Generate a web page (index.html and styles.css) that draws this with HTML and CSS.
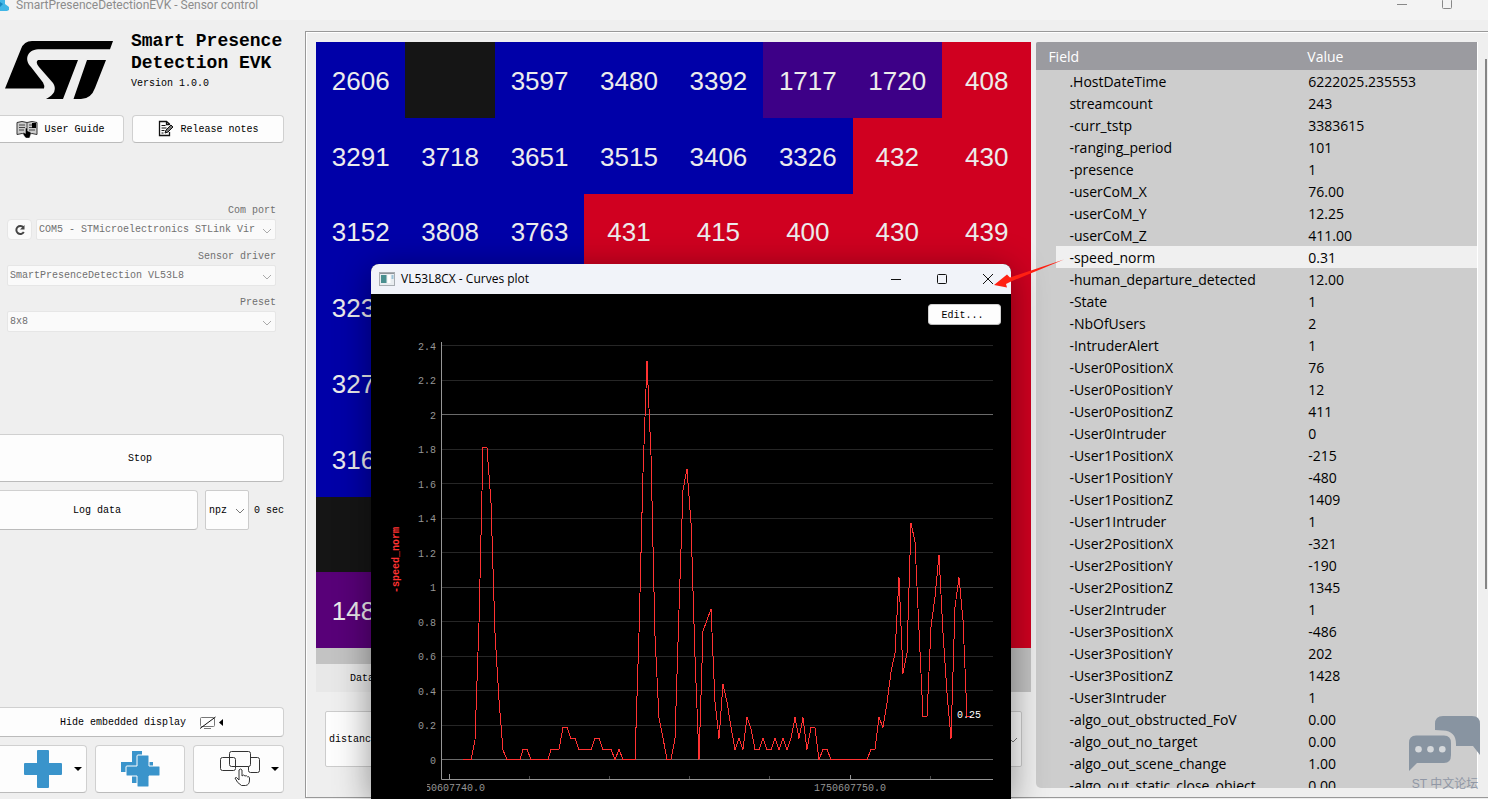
FILE: index.html
```html
<!DOCTYPE html>
<html lang="en">
<head>
<meta charset="utf-8">
<title>SmartPresenceDetectionEVK - Sensor control</title>
<link rel="stylesheet" href="styles.css">
</head>
<body>
<div class="app">
  <header class="titlebar">
    <svg class="app-icon" width="10" height="12" viewBox="0 0 10 12"><path d="M0 0H5V4L9 7V10L7 11H0Z" fill="#41b6e6"/><path d="M0 2l3 2-3 3z" fill="#1787c0"/></svg>
    <span class="app-title">SmartPresenceDetectionEVK - Sensor control</span>
    <svg class="app-controls" width="60" height="12" viewBox="0 0 60 12" fill="none" stroke="#888"><path d="M1 4.500h10"/><rect x="46.500" y="-0.500" width="9" height="9" rx="1"/></svg>
  </header>
  <div class="workspace">
    <aside class="sidebar">
      <div class="brand">
        <svg class="logo" width="110" height="60" viewBox="4 40 110 60"><path d="M5 88.500L21 49Q24 41 32 41H113L110 49.300H38C27 50 24 60 31 67L43 82.500Q45 86 44 88.500Z"/><path d="M38 60H78L63 99H46Q59 92 53 83L39 67Q35 62 38 60Z"/><path d="M87 60H106L95 88Q91 99 81 99H73.500Z"/></svg>
        <div>
          <h1 class="product">Smart Presence<br>Detection EVK</h1>
          <p class="version">Version 1.0.0</p>
        </div>
      </div>
      <div class="doc-buttons">
        <button class="btn doc" type="button">
          <svg width="22" height="18" viewBox="0 0 22 18"><path d="M1 2.500Q6 .5 11 2.500Q16 .5 21 2.500V14.500Q16 12.500 11 14.500Q6 12.500 1 14.500Z" fill="#ccc" stroke="#333"/><path d="M11 2.500v12M3 5h6M3 7.500h6M3 10h5M13 5h3M13 7.500h3M13 10h6" stroke="#444" fill="none"/><path d="M16 3h4v5h-4z"/><path d="M9 17Q6 13 7.500 12.500L9.500 13.500V8.500q1-1 2 0V11l3 1q1 1 0 3l-1 3H10Z" stroke="#ddd" stroke-width=".4"/></svg>
          User Guide</button>
        <button class="btn doc" type="button">
          <svg width="16" height="18" viewBox="0 0 16 18" fill="none" stroke="#111"><path d="M11.500 5V4L8.500 1.500H1.500v14h10V12M8.500 1.500V4.500h3" stroke-width="1.300"/><path d="M3.500 5.500h4M3.500 8h5M3.500 10.500h3M3.500 13h2" /><path d="M7 13l1-3 5-5 2 2-5 5Z" fill="#777"/></svg>
          Release notes</button>
      </div>
      <div class="settings">
        <label for="com">Com port</label>
        <div class="port-row">
          <button class="btn refresh" type="button" disabled aria-label="Refresh"><svg width="12" height="12" viewBox="0 0 12 12" fill="none" stroke="#444" stroke-width="2"><path d="M9.500 3.500A4 4 0 1 0 9.800 8"/><path d="M10.500 1v4.500H6z" fill="#444" stroke="none"/></svg></button>
          <span class="picker"><select id="com" disabled><option>COM5 - STMicroelectronics STLink Vir</option></select><svg class="chevron" width="10" height="6" viewBox="0 0 10 6"><path d="M1 1l4 4 4-4"/></svg></span>
        </div>
        <label for="driver">Sensor driver</label>
        <span class="picker"><select id="driver" disabled><option>SmartPresenceDetection VL53L8</option></select><svg class="chevron" width="10" height="6" viewBox="0 0 10 6"><path d="M1 1l4 4 4-4"/></svg></span>
        <label for="preset">Preset</label>
        <span class="picker"><select id="preset" disabled><option>8x8</option></select><svg class="chevron" width="10" height="6" viewBox="0 0 10 6"><path d="M1 1l4 4 4-4"/></svg></span>
      </div>
      <button class="btn stop" type="button">Stop</button>
      <div class="log-row">
        <button class="btn log" type="button">Log data</button>
        <span class="picker format"><select aria-label="Log format"><option>npz</option></select><svg class="chevron" width="10" height="6" viewBox="0 0 10 6"><path d="M1 1l4 4 4-4"/></svg></span>
        <span class="elapsed">0 sec</span>
      </div>
      <div class="tools">
        <button class="btn hide" type="button">Hide embedded display
          <svg width="25" height="14" viewBox="0 0 25 14"><rect x="1.500" y="1.500" width="14" height="9" rx="1" fill="none" stroke="#777"/><path d="M5 12.500h7" stroke="#777"/><path d="M1 12.500L16.500 1" stroke="#111" fill="none"/><path d="M24 3v7l-4-3.500z"/></svg>
        </button>
        <div class="tool-row">
          <button class="btn tool" type="button" aria-label="Add display"><svg width="40" height="40" viewBox="0 0 40 40"><path d="M15 1h10q1 0 1 1V14H38q1 0 1 1V25q0 1-1 1H26V38q0 1-1 1H15q-1 0-1-1V26H2q-1 0-1-1V15q0-1 1-1H14V2q0-1 1-1Z" fill="#3a94cb"/></svg><svg width="8" height="4" viewBox="0 0 8 4"><path d="M0 0h8L4 4z"/></svg></button>
          <button class="btn tool centered" type="button" aria-label="Add several displays"><svg width="40" height="40" viewBox="0 0 40 40" fill="#3a94cb"><path d="M12 2h10v11h11v10H22v11H12V23H1V13H12Z"/><path d="M18 6h10q1 0 1 1V17H39q1 0 1 1v8q0 1-1 1H29V37q0 1-1 1H18q-1 0-1-1V27H7q-1 0-1-1V18q0-1 1-1H17V7q0-1 1-1Z" stroke="#fdfdfd"/></svg></button>
          <button class="btn tool" type="button" aria-label="Select layout"><svg width="40" height="40" viewBox="0 0 40 40" fill="none" stroke="#333"><rect x=".5" y="8.500" width="15" height="13" rx="2"/><rect x="9.500" y="2.500" width="21" height="15" rx="2"/><path d="M30.500 8.500h7q2 0 2 2v11q0 2-2 2h-7q-2 0-2-2v-4"/><path d="M19 31V21q1.500-2 3 0v6q1.500-2 3 0 1.500-1 2.500 .8 1.500-.8 2 1V31q0 5-4 5.500h-4Q17 34 15 29q1-2 4 2Z" fill="#fdfdfd"/></svg><svg width="8" height="4" viewBox="0 0 8 4"><path d="M0 0h8L4 4z"/></svg></button>
        </div>
      </div>
    </aside>

    <main class="display">
      <section class="map-pane">
        <div class="heatmap">
          <span>2606</span><span class="none"></span><span>3597</span><span>3480</span><span>3392</span><span class="mid">1717</span><span class="mid">1720</span><span class="near">408</span>
          <span>3291</span><span>3718</span><span>3651</span><span>3515</span><span>3406</span><span>3326</span><span class="near">432</span><span class="near">430</span>
          <span>3152</span><span>3808</span><span>3763</span><span class="near">431</span><span class="near">415</span><span class="near">400</span><span class="near">430</span><span class="near">439</span>
          <span>3230</span><span></span><span></span><span class="near"></span><span class="near"></span><span class="near"></span><span class="near"></span><span class="near"></span>
          <span>3270</span><span></span><span></span><span class="near"></span><span class="near"></span><span class="near"></span><span class="near"></span><span class="near"></span>
          <span>3160</span><span></span><span></span><span class="near"></span><span class="near"></span><span class="near"></span><span class="near"></span><span class="near"></span>
          <span class="none"></span><span></span><span></span><span class="near"></span><span class="near"></span><span class="near"></span><span class="near"></span><span class="near"></span>
          <span class="far">1480</span><span></span><span></span><span class="near"></span><span class="near"></span><span class="near"></span><span class="near"></span><span class="near"></span>
        </div>
        <div class="tabs"><button class="tab" type="button">Data</button></div>
        <div class="source"><span class="picker"><select aria-label="Data source"><option>distance</option></select><svg class="chevron" width="10" height="6" viewBox="0 0 10 6"><path d="M1 1l4 4 4-4"/></svg></span></div>
      </section>
      <section class="fields">
        <table>
          <thead><tr><th>Field</th><th>Value</th></tr></thead>
          <tbody>
            <tr><td>.HostDateTime</td><td>6222025.235553</td></tr>
            <tr><td>streamcount</td><td>243</td></tr>
            <tr><td>-curr_tstp</td><td>3383615</td></tr>
            <tr><td>-ranging_period</td><td>101</td></tr>
            <tr><td>-presence</td><td>1</td></tr>
            <tr><td>-userCoM_X</td><td>76.00</td></tr>
            <tr><td>-userCoM_Y</td><td>12.25</td></tr>
            <tr><td>-userCoM_Z</td><td>411.00</td></tr>
            <tr class="selected"><td>-speed_norm</td><td>0.31</td></tr>
            <tr><td>-human_departure_detected</td><td>12.00</td></tr>
            <tr><td>-State</td><td>1</td></tr>
            <tr><td>-NbOfUsers</td><td>2</td></tr>
            <tr><td>-IntruderAlert</td><td>1</td></tr>
            <tr><td>-User0PositionX</td><td>76</td></tr>
            <tr><td>-User0PositionY</td><td>12</td></tr>
            <tr><td>-User0PositionZ</td><td>411</td></tr>
            <tr><td>-User0Intruder</td><td>0</td></tr>
            <tr><td>-User1PositionX</td><td>-215</td></tr>
            <tr><td>-User1PositionY</td><td>-480</td></tr>
            <tr><td>-User1PositionZ</td><td>1409</td></tr>
            <tr><td>-User1Intruder</td><td>1</td></tr>
            <tr><td>-User2PositionX</td><td>-321</td></tr>
            <tr><td>-User2PositionY</td><td>-190</td></tr>
            <tr><td>-User2PositionZ</td><td>1345</td></tr>
            <tr><td>-User2Intruder</td><td>1</td></tr>
            <tr><td>-User3PositionX</td><td>-486</td></tr>
            <tr><td>-User3PositionY</td><td>202</td></tr>
            <tr><td>-User3PositionZ</td><td>1428</td></tr>
            <tr><td>-User3Intruder</td><td>1</td></tr>
            <tr><td>-algo_out_obstructed_FoV</td><td>0.00</td></tr>
            <tr><td>-algo_out_no_target</td><td>0.00</td></tr>
            <tr><td>-algo_out_scene_change</td><td>1.00</td></tr>
            <tr><td>-algo_out_static_close_object</td><td>0.00</td></tr>
          </tbody>
        </table>
      </section>
      <div class="scroll-thumb"></div>
    </main>
  </div>

  <section class="window">
    <header class="window-bar">
      <svg width="16" height="14" viewBox="0 0 16 14"><rect x=".5" y=".5" width="15" height="13" fill="#e9edf0" stroke="#a8adb2"/><path d="M1 1.500h14" stroke="#8f959b"/><path d="M2 3h5.500v8H2z" fill="#4a8f8f"/><path d="M8.500 3h3v8h-3z" fill="#fff"/><path d="M12.500 3h2v4h-2z" fill="#9cc3d8"/></svg>
      <h2 class="window-title">VL53L8CX - Curves plot</h2>
      <div class="window-controls">
        <button type="button" aria-label="Minimize"><svg width="12" height="12" viewBox="0 0 12 12"><path d="M1 6.500h10"/></svg></button>
        <button type="button" aria-label="Maximize"><svg width="12" height="12" viewBox="0 0 12 12"><rect x="1.500" y="1.500" width="9" height="9" rx="1"/></svg></button>
        <button type="button" aria-label="Close"><svg width="12" height="12" viewBox="0 0 12 12"><path d="M1 1l10 10M11 1L1 11"/></svg></button>
      </div>
    </header>
    <div class="plot">
      <button class="btn edit" type="button">Edit...</button>
      <svg class="chart" width="640" height="505" viewBox="371 294 640 505">
        <defs><clipPath id="axis-clip"><rect x="427" y="780" width="570" height="19"/></clipPath></defs>
        <g class="grid"><path d="M442 725.500H993M442 690.500H993M442 656.500H993M442 621.500H993M442 552.500H993M442 518.500H993M442 483.500H993M442 449.500H993M442 380.500H993M442 345.500H993"/><path class="unit" d="M442 587.500H993"/><path class="major" d="M442 414.500H993M442 759.500H993"/></g>
        <path class="axis" d="M441.500 342V779.500H993M449.500 774v5M850.500 775v4"/><path class="minor" d="M529.500 776v3M609.500 776v3M689.500 776v3M769.500 776v3M930.500 776v3"/>
        <g class="ylabels"><text x="436" y="350">2.4</text><text x="436" y="384">2.2</text><text x="436" y="419">2</text><text x="436" y="453">1.8</text><text x="436" y="488">1.6</text><text x="436" y="522">1.4</text><text x="436" y="557">1.2</text><text x="436" y="591">1</text><text x="436" y="626">0.8</text><text x="436" y="660">0.6</text><text x="436" y="695">0.4</text><text x="436" y="729">0.2</text><text x="436" y="764">0</text></g>
        <g class="xlabels" clip-path="url(#axis-clip)"><text x="449" y="791">1750607740.0</text><text x="850" y="791">1750607750.0</text></g>
        <text class="series" transform="translate(399 560) rotate(-90)">-speed_norm</text>
        <polyline class="curve" points="463,759.500 471,759.500 475,740 479,623 483,447.500 487,447.500 491,503 495,633 499,700 503,750 507,759.500 520,759.500 523,749.500 527,749.500 531,759.500 548,759.500 551,749.500 559,749.500 563,727.500 567,727.500 571,738.500 575,738.500 579,749.500 591,749.500 595,738.500 599,738.500 603,749.500 611,749.500 615,759.500 619,749.500 623,759.500 635,759.500 639,633 643,473 647,361 651,455 655,636 659,718 663,738 667,759.500 671,759.500 675,738.500 679,610 683,490 687,469 691,523 695,657 699,759.500 703,631 707,620 711,609 715,702 719,738.500 723,684 727,702 731,727 735,749.500 739,738.500 743,749.500 747,717.500 751,728.500 755,749.500 759,749.500 763,738.500 767,749.500 771,749.500 775,738.500 779,749.500 783,738.500 787,749.500 791,738.500 795,717.500 799,738.500 803,717.500 807,749.500 811,727.500 815,727.500 819,759.500 823,749.500 827,749.500 831,759.500 867,759.500 871,749.500 875,749.500 879,717.500 883,727.500 887,703 891,672 895,653 899,577.500 903,673.500 907,653 911,523 915,542 919,630 923,716.500 927,716.500 931,627 935,597 939,555 943,633 947,693 951,738.500 955,607 959,577.500 963,620 967,716.500 971,716.500"/>
        <text class="reading" x="957" y="718">0.25</text>
      </svg>
    </div>
  </section>

  <svg class="pointer" width="70" height="30" viewBox="994 258 70 30"><path d="M1064 259.500L1010 277.500 1007 274.500 994 285 1007 287.500 1006 284 1011 281.500Z" fill="#ff2012"/></svg>
  <div class="watermark">
    <svg width="72" height="56" viewBox="1409 716 72 56" fill="#8894a1"><path d="M1435 730V724Q1435 716 1443 716H1472Q1480 716 1480 724V755L1473 746H1456V744Q1456 731 1443 730.500Z"/><path d="M1416 735.500H1444Q1451 735.500 1451 743V755Q1451 763 1444 763H1417L1409 771V743Q1409 735.500 1416 735.500Z"/><g fill="#d5d8db"><circle cx="1418.500" cy="749.300" r="3.300"/><circle cx="1430.500" cy="749.300" r="3.300"/><circle cx="1442.300" cy="749.300" r="3.300"/></g></svg>
    <span>ST 中文论坛</span>
  </div>
</div>
</body>
</html>
```

FILE: styles.css
```css
* { box-sizing: border-box; }
body { margin: 0; background: #efefef; color: #000; font: 10px/14px "Liberation Mono", monospace; }
h1, h2, p { margin: 0; font-weight: normal; }
button, select { font: inherit; color: inherit; margin: 0; }
svg { display: block; flex: none; }

.app { position: relative; display: flex; flex-direction: column; height: 100vh; overflow: hidden; }
.titlebar { display: flex; align-items: flex-start; flex: none; height: 20px; padding-right: 32px; background: #f3f3f3; color: #8c8c8c; font: 12px/10px Roboto, "Noto Sans", sans-serif; }
.app-title { margin-left: 6px; }
.app-controls { margin-left: auto; }
.workspace { display: flex; flex: 1; min-height: 0; }

.sidebar { display: flex; flex-direction: column; flex: none; width: 288px; margin: 10px 21px 6px -4px; }
.brand { display: flex; gap: 17px; height: 85px; padding-left: 8px; }
.logo { margin-top: 10px; }
.product { font-weight: bold; font-size: 18px; line-height: 22px; white-space: nowrap; }
.version { margin-top: 3px; }

.btn { display: flex; align-items: center; justify-content: center; padding: 2px 0 0; background: #fdfdfd; border: 1px solid #d0d0d0; border-bottom-color: #bbb; border-radius: 4px; white-space: nowrap; }
.doc-buttons { display: flex; gap: 8px; }
.doc { flex: 152; height: 28px; gap: 7px; }
.doc:first-child { flex: 128; }
.doc svg { margin-bottom: 2px; }

.settings { display: flex; flex-direction: column; padding: 61px 8px 0 11px; color: #707070; }
.settings label { line-height: 14px; text-align: right; margin-bottom: 1px; }
.settings .picker { height: 21px; margin-bottom: 10px; }
.port-row { display: flex; gap: 4px; }
.port-row .picker { flex: 1; }
.refresh { width: 25px; height: 21px; padding: 0; background: #fafafa; border-color: #e6e6e6; }

.picker { position: relative; display: flex; }
.picker select { appearance: none; width: 100%; padding: 2px 18px 0 3px; background: #fdfdfd; border: 1px solid #ccc; border-radius: 2px; opacity: 1; }
.picker select:disabled { padding: 1px 18px 0 2px; background: #fafafa; border-color: #e6e6e6; color: #707070; }
.chevron { position: absolute; right: 4px; top: 50%; margin-top: -2px; fill: none; stroke: #777; pointer-events: none; }
.settings .chevron { stroke: #aaa; }

.stop { height: 48px; margin-top: 92px; }
.log-row { display: flex; align-items: center; height: 40px; margin-top: 8px; }
.log { flex: 1; height: 40px; }
.format { width: 44px; height: 40px; margin: 0 5px 0 7px; }
.elapsed { width: 30px; padding-top: 2px; white-space: nowrap; }
.tools { margin-top: auto; }
.hide { width: 100%; height: 30px; padding-left: 4px; gap: 13px; }
.tool-row { display: grid; grid-template-columns: repeat(3, 1fr); gap: 8px; margin-top: 8px; }
.tool { height: 48px; justify-content: flex-end; gap: 11px; padding: 0 4px 0 0; }
.tool.centered { justify-content: center; padding: 0; }

.display { display: flex; flex: 1; min-width: 0; margin: 11px 0 1px; padding: 10px 0 9px 10px; border: 1px solid #999; border-right: 0; box-shadow: inset 1px 1px 0 #fff; }
.map-pane { display: flex; flex-direction: column; flex: 716; min-width: 0; }
.heatmap { display: grid; grid-template: repeat(8, 1fr) / repeat(8, 1fr); flex: 1; background: #0000a8; color: #ececec; font: 26px/30px "Liberation Sans", Arial, sans-serif; }
.heatmap span { display: flex; align-items: center; justify-content: center; padding-top: 2px; }
.heatmap .near { background: #d00020; }
.heatmap .mid { background: #3d0087; }
.heatmap .far { background: #580078; }
.heatmap .none { background: #151515; }
.tabs { display: flex; align-items: flex-end; height: 44px; background: #c3c3c3; }
.tab { width: 92px; height: 28px; padding-top: 2px; border: 0; background: #e8e8e8; }
.source { padding: 19px 9px 21px; }
.source .picker { height: 56px; }

.fields { flex: 441; min-width: 0; margin-left: 5px; overflow: hidden; background: #cdcdcd; border-right: 1px solid #fff; border-radius: 2px 0 5px 5px; }
.fields table { width: 100%; border-collapse: collapse; table-layout: fixed; font: 14px/20px "Open Sans", "Noto Sans", sans-serif; }
.fields th { height: 28px; padding: 2px 0 0 12px; background: #9b9ba0; color: #fff; font-weight: normal; text-align: left; }
.fields th:first-child { width: 59%; }
.fields th + th { padding-left: 11px; }
.fields td { height: 22px; padding: 2px 0 0 12px; white-space: nowrap; }
.fields td:first-child { padding-left: 33px; }
.selected td { background: #f0f0f0; }
.selected td:first-child { background: linear-gradient(to right, #cdcdcd 20px, #f0f0f0 20px); }
.scroll-thumb { flex: none; width: 2px; height: 71%; margin: 17px 1px 0 7px; background: #858585; }

.window { position: absolute; left: 371px; top: 264px; bottom: 0; width: 640px; display: flex; flex-direction: column; background: #000; border-radius: 8px 8px 0 0; box-shadow: 0 6px 36px rgba(0, 0, 0, .42); }
.window-bar { display: flex; align-items: center; flex: none; height: 30px; padding-left: 8px; background: #f1f3f9; border-radius: 8px 8px 0 0; font: 12px/16px "Open Sans", "Noto Sans", sans-serif; }
.window-title { margin-left: 6px; font-size: 12px; }
.window-controls { display: flex; margin-left: auto; }
.window-controls button { display: flex; justify-content: center; width: 46px; padding: 0; border: 0; background: none; }
.window-controls svg { fill: none; stroke: #111; }
.plot { position: relative; flex: 1; min-height: 0; overflow: hidden; }
.edit { position: absolute; top: 10px; right: 10px; width: 73px; height: 21px; padding-right: 4px; }
.chart text { font: 10px "Liberation Mono", monospace; fill: #969696; }
.grid path { stroke: #262626; fill: none; }
.grid .unit { stroke: #383838; }
.grid .major { stroke: #6a6a6a; }
.axis { stroke: #969696; fill: none; }
.minor { stroke: #4a4a4a; }
.ylabels { text-anchor: end; }
.xlabels { text-anchor: middle; }
.chart .series { fill: #ff3232; font-weight: bold; text-anchor: middle; }
.chart .reading { fill: #fff; }
.curve { fill: none; stroke: #ff3232; shape-rendering: crispEdges; }

.pointer { position: absolute; left: 994px; top: 258px; }
.watermark { position: absolute; right: 7px; bottom: 7px; display: flex; flex-direction: column; align-items: center; gap: 4px; color: #9097a5; font: 12px/16px "Liberation Sans", "Noto Sans CJK SC", sans-serif; white-space: nowrap; }
```
